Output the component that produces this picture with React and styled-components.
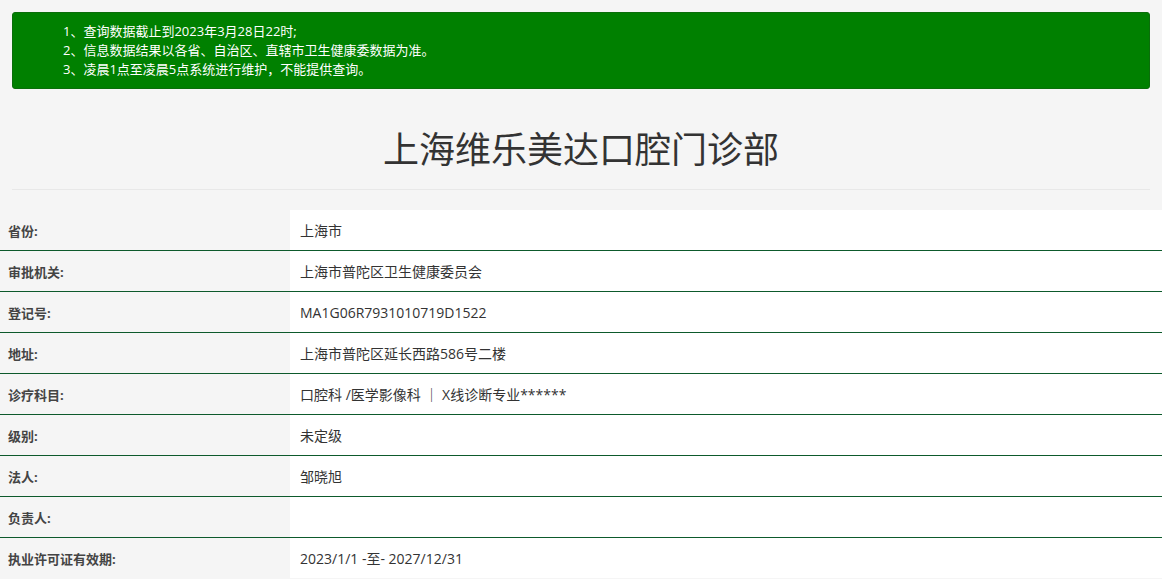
import React from "react";
import styled, { createGlobalStyle } from "styled-components";

const Global = createGlobalStyle`
  body { margin: 0; background: #f5f5f5; font-family: "Open Sans", "Noto Sans CJK SC", sans-serif; color: #333; }
`;
const Page = styled.div`padding-top: 12px;`;
const Notice = styled.div`
  margin: 0 12px; background: #008000; border: 1px solid #0a6e0a; border-radius: 3px;
  padding: 9px 0 9px 50px; color: #fff; font-size: 13px; line-height: 19px;
`;
const Title = styled.h1`
  margin: 36px 12px 0; padding-bottom: 14px; border-bottom: 1px solid #e8e8e8;
  text-align: center; font-weight: 400; font-size: 36px; line-height: 50px; color: #333;
`;
const Table = styled.div`margin-top: 20px;`;
const Row = styled.div`
  display: grid; grid-template-columns: 290px 1fr; height: 40px;
  border-bottom: 1px solid ${p => (p.last ? "transparent" : "#0d5a2c")};
`;
const Label = styled.div`
  display: flex; align-items: center; padding-left: 8px; font-size: 13px; font-weight: 700; color: #444;
`;
const Value = styled.div`
  display: flex; align-items: center; padding-left: 10px; background: #fff; font-size: 14px; color: #333;
`;

const rows = [
  ["省份:", "上海市"],
  ["审批机关:", "上海市普陀区卫生健康委员会"],
  ["登记号:", "MA1G06R7931010719D1522"],
  ["地址:", "上海市普陀区延长西路586号二楼"],
  ["诊疗科目:", "口腔科 /医学影像科 ｜ X线诊断专业******"],
  ["级别:", "未定级"],
  ["法人:", "邹晓旭"],
  ["负责人:", ""],
  ["执业许可证有效期:", "2023/1/1 -至- 2027/12/31"],
];

export default function App() {
  return (
    <Page>
      <Global />
      <Notice>
        <div>1、查询数据截止到2023年3月28日22时;</div>
        <div>2、信息数据结果以各省、自治区、直辖市卫生健康委数据为准。</div>
        <div>3、凌晨1点至凌晨5点系统进行维护，不能提供查询。</div>
      </Notice>
      <Title>上海维乐美达口腔门诊部</Title>
      <Table>
        {rows.map(([l, v], i) => (
          <Row key={l} last={i === rows.length - 1}>
            <Label>{l}</Label>
            <Value>{v}</Value>
          </Row>
        ))}
      </Table>
    </Page>
  );
}
